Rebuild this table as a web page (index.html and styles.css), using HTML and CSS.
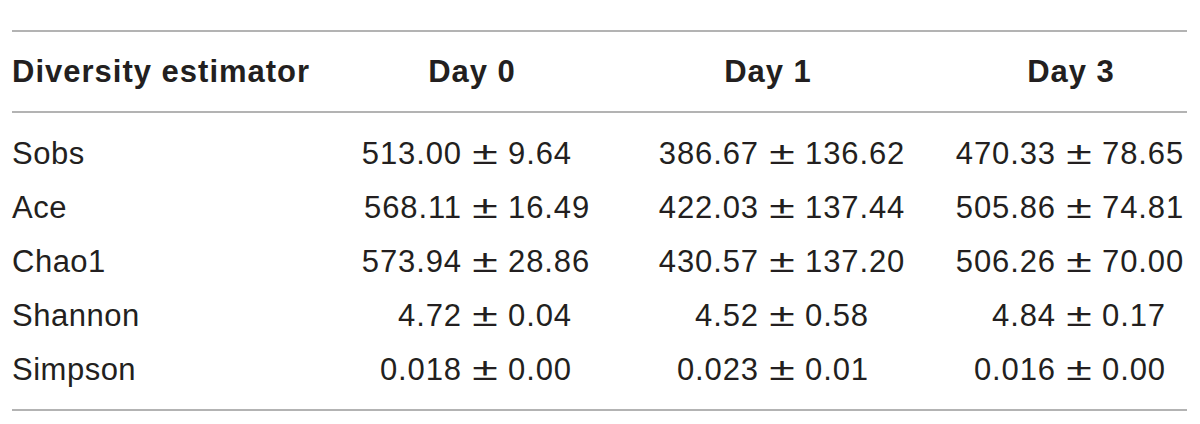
FILE: index.html
```html
<!DOCTYPE html>
<html lang="en">
<head>
<meta charset="utf-8">
<title>Diversity estimators</title>
<link rel="stylesheet" href="styles.css">
</head>
<body>
<table class="tbl">
  <colgroup>
    <col class="c1"><col class="c2"><col class="c3"><col class="c4">
  </colgroup>
  <thead>
    <tr>
      <th class="name">Diversity estimator</th>
      <th class="h0">Day 0</th>
      <th class="h1">Day 1</th>
      <th class="h3">Day 3</th>
    </tr>
  </thead>
  <tbody>
    <tr>
      <td class="name">Sobs</td>
      <td><span class="v"><span class="l">513.00</span><span class="pm">±</span><span class="r">9.64</span></span></td>
      <td><span class="v"><span class="l">386.67</span><span class="pm">±</span><span class="r">136.62</span></span></td>
      <td><span class="v"><span class="l">470.33</span><span class="pm">±</span><span class="r">78.65</span></span></td>
    </tr>
    <tr>
      <td class="name">Ace</td>
      <td><span class="v"><span class="l">568.11</span><span class="pm">±</span><span class="r">16.49</span></span></td>
      <td><span class="v"><span class="l">422.03</span><span class="pm">±</span><span class="r">137.44</span></span></td>
      <td><span class="v"><span class="l">505.86</span><span class="pm">±</span><span class="r">74.81</span></span></td>
    </tr>
    <tr>
      <td class="name">Chao1</td>
      <td><span class="v"><span class="l">573.94</span><span class="pm">±</span><span class="r">28.86</span></span></td>
      <td><span class="v"><span class="l">430.57</span><span class="pm">±</span><span class="r">137.20</span></span></td>
      <td><span class="v"><span class="l">506.26</span><span class="pm">±</span><span class="r">70.00</span></span></td>
    </tr>
    <tr>
      <td class="name">Shannon</td>
      <td><span class="v"><span class="l">4.72</span><span class="pm">±</span><span class="r">0.04</span></span></td>
      <td><span class="v"><span class="l">4.52</span><span class="pm">±</span><span class="r">0.58</span></span></td>
      <td><span class="v"><span class="l">4.84</span><span class="pm">±</span><span class="r">0.17</span></span></td>
    </tr>
    <tr>
      <td class="name">Simpson</td>
      <td><span class="v"><span class="l">0.018</span><span class="pm">±</span><span class="r">0.00</span></span></td>
      <td><span class="v"><span class="l">0.023</span><span class="pm">±</span><span class="r">0.01</span></span></td>
      <td><span class="v"><span class="l">0.016</span><span class="pm">±</span><span class="r">0.00</span></span></td>
    </tr>
  </tbody>
</table>
</body>
</html>
```

FILE: styles.css
```css
html, body {
  margin: 0;
  padding: 0;
  background: #ffffff;
}

body {
  font-family: "Liberation Sans", Arial, Helvetica, sans-serif;
  color: #231f20;
}

.tbl {
  margin: 30px 0 0 12px;
  width: 1175px;
  table-layout: fixed;
  border-collapse: separate;
  border-spacing: 0;
}

.c1 { width: 365px; }
.c2 { width: 216px; }
.c3 { width: 378px; }
.c4 { width: 216px; }

.tbl th {
  font-size: 31px;
  font-weight: bold;
  letter-spacing: 1px;
  line-height: 34px;
  padding: 23px 0 22px 0;
  text-align: center;
  white-space: nowrap;
  border-top: 2px solid #b3b3b3;
  border-bottom: 2px solid #b3b3b3;
}

.tbl th.name { text-align: left; }
.tbl th.h0 { padding-right: 26px; }
.tbl th.h1 { padding-right: 28px; }
.tbl th.h3 { padding-right: 16px; }

.tbl td {
  font-size: 31px;
  line-height: 54px;
  letter-spacing: 0.5px;
  padding: 0;
  white-space: nowrap;
}

.tbl tbody tr:first-child td { padding-top: 14px; }

.tbl tbody tr:last-child td {
  padding-bottom: 12px;
  border-bottom: 2px solid #b3b3b3;
}

.v {
  display: flex;
  justify-content: center;
  letter-spacing: 0.9px;
}

.l {
  flex: 1 1 0;
  min-width: 0;
  display: flex;
  justify-content: flex-end;
}

.r {
  flex: 1 1 0;
  min-width: 0;
  display: flex;
  justify-content: flex-start;
}

.pm {
  flex: 0 0 26px;
  margin: 0 10px;
  text-align: center;
  letter-spacing: 0;
  transform: scaleX(1.5);
}
```
